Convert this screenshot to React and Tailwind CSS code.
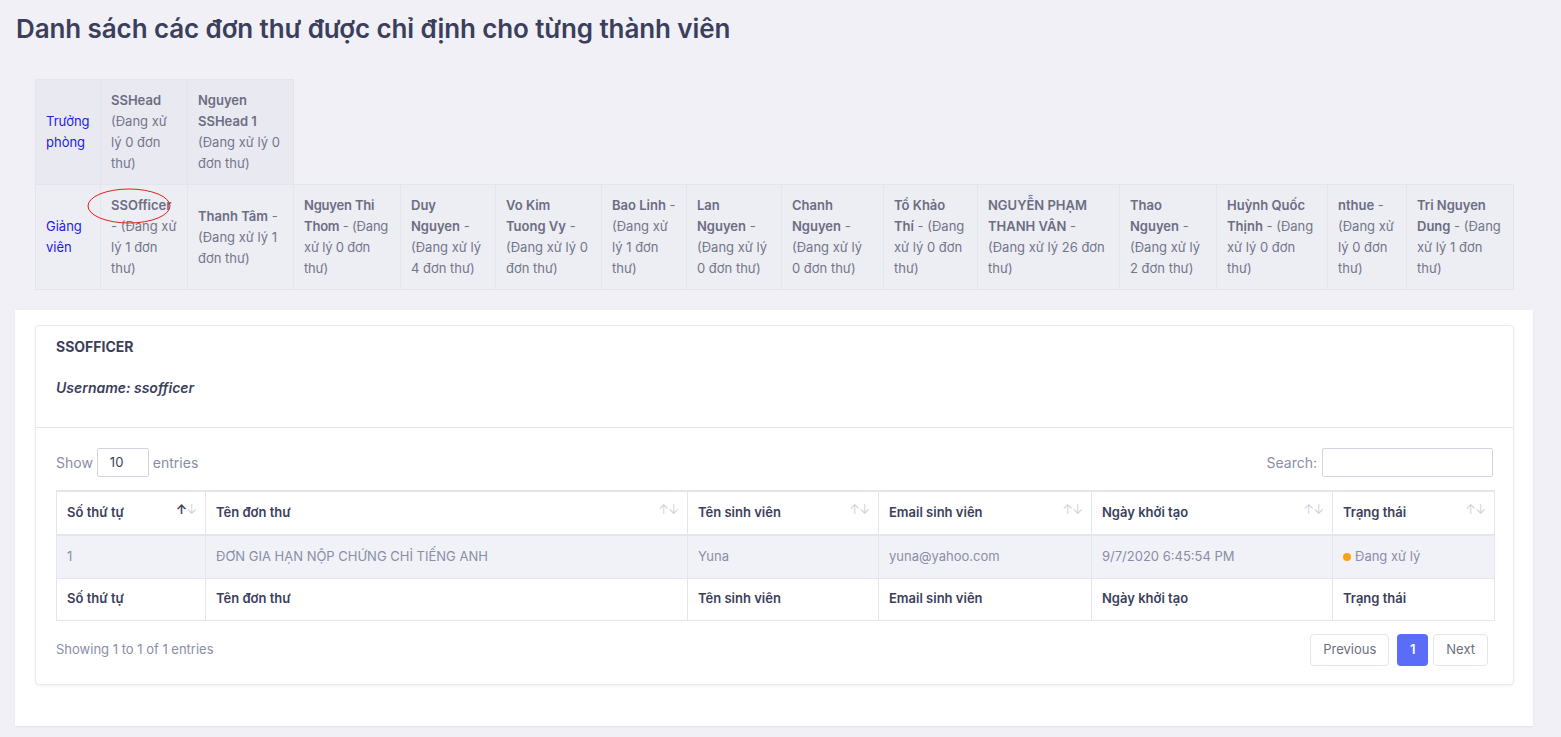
import React from 'react';

const heads = [
  { name: 'SSHead', count: 0 },
  { name: 'Nguyen SSHead 1', count: 0 },
];

const officers = [
  { name: 'SSOfficer', count: 1 },
  { name: 'Thanh Tâm', count: 1 },
  { name: 'Nguyen Thi Thom', count: 0, tight: true },
  { name: 'Duy Nguyen', count: 4 },
  { name: 'Vo Kim Tuong Vy', count: 0 },
  { name: 'Bao Linh', count: 1 },
  { name: 'Lan Nguyen', count: 0 },
  { name: 'Chanh Nguyen', count: 0 },
  { name: 'Tổ Khảo Thí', count: 0 },
  { name: 'NGUYỄN PHẠM THANH VÂN', count: 26 },
  { name: 'Thao Nguyen', count: 2 },
  { name: 'Huỳnh Quốc Thịnh', count: 0 },
  { name: 'nthue', count: 0 },
  { name: 'Tri Nguyen Dung', count: 1 },
];

const colWidths = [
  'w-[65px]', 'w-[87px]', 'w-[106px]', 'w-[107px]', 'w-[95px]', 'w-[106px]', 'w-[85px]', 'w-[95px]',
  'w-[102px]', 'w-[94px]', 'w-[142px]', 'w-[97px]', 'w-[111px]', 'w-[79px]', 'w-[107px]',
];

const columns = [
  { label: 'Số thứ tự', w: 'w-[149px]', active: true },
  { label: 'Tên đơn thư', w: 'w-[482px]' },
  { label: 'Tên sinh viên', w: 'w-[191px]' },
  { label: 'Email sinh viên', w: 'w-[213px]' },
  { label: 'Ngày khởi tạo', w: 'w-[241px]' },
  { label: 'Trạng thái', w: 'w-[162px]' },
];

function SortIcon({ active }) {
  return (
    <span className="absolute right-[9px] top-[11px] text-[13px] leading-none tracking-[-1px] font-light">
      <span className={active ? 'text-[#3b3f5c] font-semibold' : 'text-[#c9ccd6]'}>↑</span>
      <span className="text-[#c9ccd6]">↓</span>
    </span>
  );
}

function App() {
  return (
    <div className="min-h-[737px] bg-[#f0f0f6] font-['Inter',sans-serif] pb-3">
      <h1 className="pl-4 pt-[12px] text-[26px] leading-[34px] font-semibold tracking-[-0.1px] text-[#3b3f5c]">
        Danh sách các đơn thư được chỉ định cho từng thành viên
      </h1>

      <table className="ml-[35px] mt-[33px] table-fixed border-collapse text-[13px] leading-[21px] text-[#73768a]">
        <colgroup>
          {colWidths.map((w, i) => (
            <col key={i} className={w} />
          ))}
        </colgroup>
        <tbody>
          <tr>
            <td className="border border-[#e4e4ec] bg-[#e9e9f1] px-[10px] py-[10px] align-middle text-[#1c1ce8]">
              Trưởng phòng
            </td>
            {heads.map((h, i) => (
              <td key={i} className="border border-[#e4e4ec] bg-[#e9e9f1] px-[10px] py-[10px] align-middle">
                <span className="font-semibold text-[#6b6e82]">{h.name}</span>
                <br />
                (Đang xử lý {h.count} đơn thư)
              </td>
            ))}
          </tr>
          <tr className="bg-[#ededf4]">
            <td className="border border-[#e4e4ec] px-[10px] py-[10px] align-middle text-[#1c1ce8]">
              Giảng viên
            </td>
            {officers.map((o, i) => (
              <td
                key={i}
                className={`relative border border-[#e4e4ec] px-[10px] py-[10px] align-middle ${o.tight ? 'tracking-[-0.2px]' : ''}`}
              >
                {i === 0 && (
                  <svg className="absolute left-[-14px] top-[3px]" width="84" height="36" viewBox="0 0 84 36">
                    <ellipse cx="42" cy="18" rx="41" ry="17" fill="none" stroke="#e0201c" strokeWidth="1" />
                  </svg>
                )}
                <span className="font-semibold text-[#6b6e82]">{o.name}</span> - (Đang xử lý {o.count} đơn thư)
              </td>
            ))}
          </tr>
        </tbody>
      </table>

      <div className="ml-[15px] mr-[28px] mt-[20px] bg-white pt-[15px] pb-[41px] pl-5 pr-[19px] shadow-[0_1px_2px_rgba(0,0,0,0.06)]">
        <div className="rounded-[4px] border border-[#e9e9f0] shadow-[0_1px_3px_rgba(0,0,0,0.06)]">
          <div className="px-5 pt-[12px] pb-[30px] border-b border-[#e4e4ee]">
            <div className="text-[14px] leading-[18px] font-bold text-[#3b3f5c]">SSOFFICER</div>
            <div className="mt-[23px] text-[14px] leading-[18px] font-semibold italic text-[#3b3f5c]">
              Username: ssofficer
            </div>
          </div>

          <div className="pl-5 pr-[20px] pt-5 pb-[18px]">
            <div className="flex items-center justify-between">
              <div className="flex items-center gap-[4px] text-[14px] text-[#888ea8]">
                Show
                <div className="flex h-[29px] w-[52px] items-center rounded-[2px] border border-[#d3d5de] pl-[12px] text-[13px] text-[#3b3f5c]">
                  10
                </div>
                entries
              </div>
              <div className="flex items-center gap-[5px] text-[14px] text-[#888ea8]">
                Search:
                <div className="h-[29px] w-[171px] rounded-[2px] border border-[#d3d5de]" />
              </div>
            </div>

            <table className="mt-[13px] w-full table-fixed border-collapse border-t-2 border-[#e4e5ee] text-[13px]">
              <colgroup>
                {columns.map((c, i) => (
                  <col key={i} className={c.w} />
                ))}
              </colgroup>
              <thead>
                <tr className="h-[44px] border-b-2 border-[#e4e5ee]">
                  {columns.map((c, i) => (
                    <th key={i} className="relative border-x border-[#e4e5ee] pl-[10px] text-left font-semibold text-[#3b3f5c]">
                      {c.label}
                      <SortIcon active={c.active} />
                    </th>
                  ))}
                </tr>
              </thead>
              <tbody>
                <tr className="h-[43px] bg-[#f1f2f7] text-[#888ea8]">
                  <td className="border border-[#e4e5ee] pl-[10px]">1</td>
                  <td className="border border-[#e4e5ee] pl-[10px]">ĐƠN GIA HẠN NỘP CHỨNG CHỈ TIẾNG ANH</td>
                  <td className="border border-[#e4e5ee] pl-[10px]">Yuna</td>
                  <td className="border border-[#e4e5ee] pl-[10px]">yuna@yahoo.com</td>
                  <td className="border border-[#e4e5ee] pl-[10px]">9/7/2020 6:45:54 PM</td>
                  <td className="border border-[#e4e5ee] pl-[10px]">
                    <span className="mr-[4px] inline-block h-[8px] w-[8px] rounded-full bg-[#f8a30f]" />
                    Đang xử lý
                  </td>
                </tr>
              </tbody>
              <tfoot>
                <tr className="h-[42px] border-b border-[#e4e5ee]">
                  {columns.map((c, i) => (
                    <td key={i} className="border-x border-[#e4e5ee] pl-[10px] font-semibold text-[#3b3f5c]">
                      {c.label}
                    </td>
                  ))}
                </tr>
              </tfoot>
            </table>

            <div className="mt-[13px] flex items-center justify-between">
              <div className="text-[13px] text-[#888ea8]">Showing 1 to 1 of 1 entries</div>
              <div className="mr-[5px] flex items-center text-[13px]">
                <div className="flex h-[32px] items-center rounded-[4px] border border-[#e3e5ec] px-[12px] text-[#6b7080]">
                  Previous
                </div>
                <div className="ml-[8px] flex h-[32px] w-[31px] items-center justify-center rounded-[4px] bg-[#5b6cf9] font-semibold text-white">
                  1
                </div>
                <div className="ml-[5px] flex h-[32px] items-center rounded-[4px] border border-[#e3e5ec] px-[12px] text-[#6b7080]">
                  Next
                </div>
              </div>
            </div>
          </div>
        </div>
      </div>
    </div>
  );
}

export default App;
